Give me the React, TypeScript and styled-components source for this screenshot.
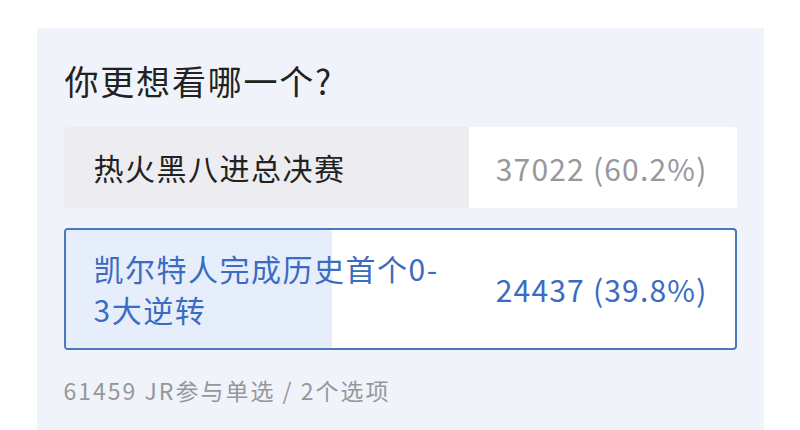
import styled, { createGlobalStyle } from "styled-components";

interface PollOption {
  label: string;
  count: number;
  percent: number;
  voted: boolean;
}

const options: PollOption[] = [
  { label: "热火黑八进总决赛", count: 37022, percent: 60.2, voted: false },
  { label: "凯尔特人完成历史首个0-3大逆转", count: 24437, percent: 39.8, voted: true },
];

const Poll = () => {
  return (
    <Page>
      <Card>
        <Title>你更想看哪一个?</Title>
        <OptionList>
          {options.map((opt) => (
            <Option key={opt.label} $voted={opt.voted}>
              <Fill $voted={opt.voted} style={{ width: `${opt.percent}%` }} />
              <Label $voted={opt.voted}>{opt.label}</Label>
              <Count $voted={opt.voted}>
                {opt.count} ({opt.percent.toFixed(1)}%)
              </Count>
            </Option>
          ))}
        </OptionList>
        <Footer>61459 JR参与单选 / 2个选项</Footer>
      </Card>
    </Page>
  );
};

export default function App() {
  return (
    <>
      <GlobalStyle />
      <Poll />
    </>
  );
}

const GlobalStyle = createGlobalStyle`
  body {
    margin: 0;
    background: #ffffff;
    font-family: "Noto Sans CJK SC", "Noto Sans", sans-serif;
  }
`;

const Page = styled.div`
  width: 800px;
  height: 430px;
  overflow: hidden;
  padding-top: 28px;
  box-sizing: border-box;
`;

const Card = styled.div`
  width: 727px;
  min-height: 420px;
  margin: 0 auto;
  box-sizing: border-box;
  padding: 33px 27px 0;
  background: #f0f3fa;
`;

const Title = styled.div`
  font-size: 34px;
  line-height: 40px;
  letter-spacing: 1.8px;
  color: #222222;
  padding-left: 1px;
`;

const OptionList = styled.div`
  display: flex;
  flex-direction: column;
  gap: 20px;
  margin-top: 26px;
`;

const Option = styled.div<{ $voted: boolean }>`
  position: relative;
  display: flex;
  align-items: center;
  min-height: 80px;
  box-sizing: border-box;
  padding: ${(p) => (p.$voted ? "18px 27px 18px 28px" : "20px 29px 20px 30px")};
  background: #ffffff;
  border: ${(p) => (p.$voted ? "2px solid #4a77c0" : "none")};
  border-radius: ${(p) => (p.$voted ? "4px" : "2px")};
  overflow: hidden;
`;

const Fill = styled.div<{ $voted: boolean }>`
  position: absolute;
  left: 0;
  top: 0;
  bottom: 0;
  background: ${(p) => (p.$voted ? "#e6eefb" : "#ededf1")};
`;

const Label = styled.div<{ $voted: boolean }>`
  position: relative;
  flex: 1;
  max-width: 362px;
  font-size: 30px;
  line-height: 41px;
  letter-spacing: 1.5px;
  word-break: break-all;
  color: ${(p) => (p.$voted ? "#3b6bc2" : "#222222")};
`;

const Count = styled.div<{ $voted: boolean }>`
  position: relative;
  margin-left: auto;
  white-space: nowrap;
  font-size: 30px;
  line-height: 40px;
  letter-spacing: 1.2px;
  color: ${(p) => (p.$voted ? "#3b6bc2" : "#98989c")};
`;

const Footer = styled.div`
  margin-top: 25px;
  font-size: 23px;
  line-height: 30px;
  letter-spacing: 2px;
  color: #97979b;
`;
